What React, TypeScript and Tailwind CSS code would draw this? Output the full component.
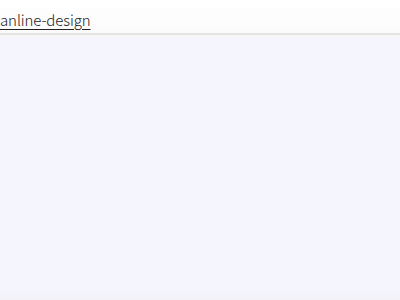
export default function App() {
  return (
    <div className="w-[400px] h-[300px] flex flex-col bg-[#f5f5fd] font-['Noto_Sans_CJK_JP',sans-serif]">
      <header className="h-[33px] shrink-0 bg-gradient-to-b from-white to-[#fbfbfb] flex items-center pt-[5px]">
        <a href="#" className="text-[15px] leading-none font-light text-[#222] underline underline-offset-[3px] decoration-1 tracking-[-0.1px]">
          anline-design
        </a>
      </header>
      <div className="h-[2px] bg-[#e4e4e4]" />
      <div className="h-[2px] bg-[#f8f6f0]" />
      <main className="flex-1 bg-[#f5f5fd]" />
      <div className="h-[12px] bg-gradient-to-b from-[#f5f5fd] to-[#f1f1f6]" />
    </div>
  );
}
